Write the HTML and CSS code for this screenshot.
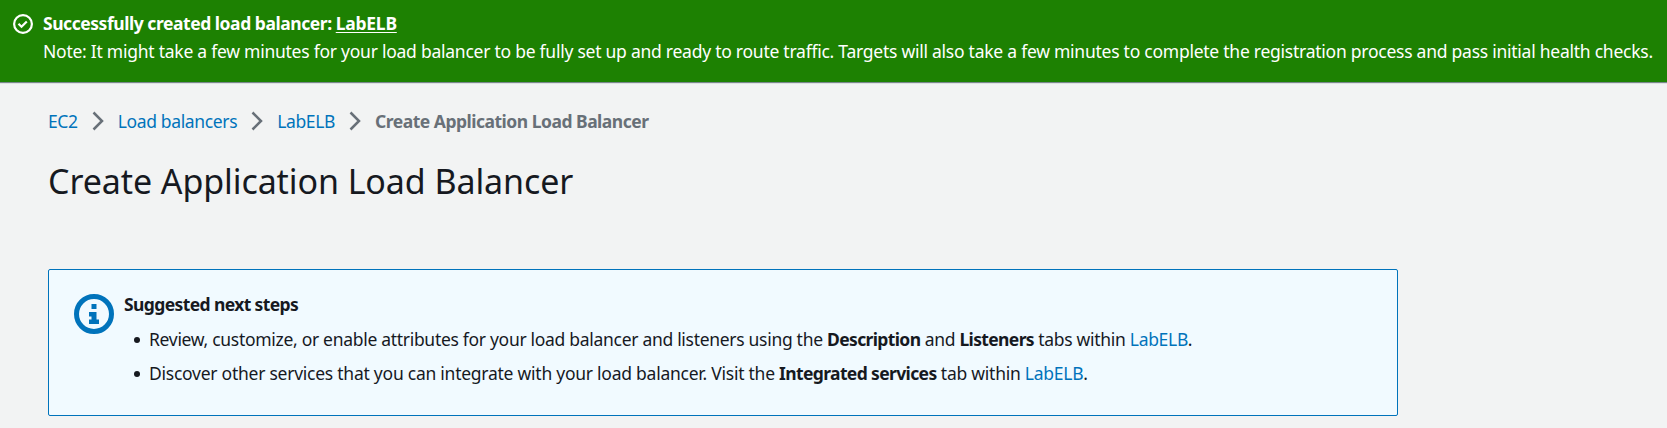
FILE: index.html
```
<!DOCTYPE html>
<html lang="en">
<head>
<meta charset="utf-8">
<title>Create Application Load Balancer</title>
<link rel="stylesheet" href="styles.css">
</head>
<body>
<div class="flash">
  <svg class="flash-icon" viewBox="0 0 20 20"><circle cx="10" cy="10" r="8.900"/><path d="M5.500 9.800l3 3L13.800 7.500"/></svg>
  <div class="flash-text">
    <div class="flash-title">Successfully created load balancer: <a class="flash-link" href="#">LabELB</a></div>
    <div class="flash-note">Note: It might take a few minutes for your load balancer to be fully set up and ready to route traffic. Targets will also take a few minutes to complete the registration process and pass initial health checks.</div>
  </div>
</div>
<main class="page">
  <nav class="crumbs">
    <a href="#">EC2</a><svg class="chevron" viewBox="0 0 12 20"><path d="M1.500 1.500L10 10l-8.500 8.500"/></svg>
    <a href="#">Load balancers</a><svg class="chevron" viewBox="0 0 12 20"><path d="M1.500 1.500L10 10l-8.500 8.500"/></svg>
    <a href="#">LabELB</a><svg class="chevron" viewBox="0 0 12 20"><path d="M1.500 1.500L10 10l-8.500 8.500"/></svg>
    <span class="current">Create Application Load Balancer</span>
  </nav>
  <h1 class="title">Create Application Load Balancer</h1>
  <section class="info">
    <svg class="info-icon" viewBox="0 0 40 40"><circle cx="20" cy="20" r="17.500"/><path d="M17.500 10h5v5h-5zM15 18h7.500v7.500H25v4.500H15v-4.500h2.500v-3H15z"/></svg>
    <div class="info-body">
      <h2 class="info-title">Suggested next steps</h2>
      <ul class="steps">
        <li class="step-review">Review, customize, or enable attributes for your load balancer and listeners using the <b>Description</b> and <b>Listeners</b> tabs within <a href="#">LabELB</a>.</li>
        <li>Discover other services that you can integrate with your load balancer. Visit the <b>Integrated services</b> tab within <a href="#">LabELB</a>.</li>
      </ul>
    </div>
  </section>
</main>
</body>
</html>
```
FILE: styles.css
```
* { box-sizing: border-box; }
body { margin: 0; background: #f2f3f3; color: #16191f; font: 17.5px/28px "Noto Sans", sans-serif; letter-spacing: -0.25px; height: 428px; overflow: hidden; }
a { color: #0073bb; text-decoration: none; }
b { font-weight: 700; letter-spacing: -0.63px; }
.flash { display: flex; gap: 10px; height: 82px; padding: 9px 13px; background: #1d8102; color: #fff; box-shadow: 0 1px 1px rgba(0,28,36,.5); white-space: nowrap; }
.flash-icon { width: 20px; height: 20px; margin-top: 5px; flex: none; fill: none; stroke: #fff; stroke-width: 2.2; }
.flash-title { font-weight: 700; letter-spacing: -0.45px; }
.flash-link { color: #fff; letter-spacing: -0.25px; text-decoration: underline; text-decoration-thickness: 1px; text-underline-offset: 2px; }
.page { padding: 25px 48px; }
.crumbs { display: flex; align-items: center; height: 28px; line-height: 26px; letter-spacing: -0.36px; }
.crumbs a, .current { padding-bottom: 1px; }
.chevron { width: 12px; height: 20px; margin: 0 14px; fill: none; stroke: #687078; stroke-width: 2.5; }
.current { color: #687078; font-weight: 700; letter-spacing: -0.5px; }
.title { margin: 24px 0 0; font-size: 34px; line-height: 44px; font-weight: 400; letter-spacing: -0.09px; }
.info { display: flex; width: 1350px; height: 147px; margin-top: 66px; padding: 24px 25px; border: 1px solid #0073bb; border-radius: 2px; background: #f1faff; }
.info-icon { width: 40px; height: 40px; flex: none; fill: #0073bb; }
.info-icon circle { fill: none; stroke: #0073bb; stroke-width: 5; }
.info-body { margin-left: 10px; }
.info-title { margin: 0; font-size: 17.5px; line-height: 20px; font-weight: 700; letter-spacing: -0.61px; }
.steps { margin: 8px 0; padding-left: 10px; list-style: none; }
.steps li { display: block; line-height: 34px; }
.steps li::before { content: ""; display: inline-block; width: 6px; height: 6px; margin-right: 9px; border-radius: 50%; background: #16191f; vertical-align: 3px; }
.steps .step-review { letter-spacing: -0.3px; }
```
